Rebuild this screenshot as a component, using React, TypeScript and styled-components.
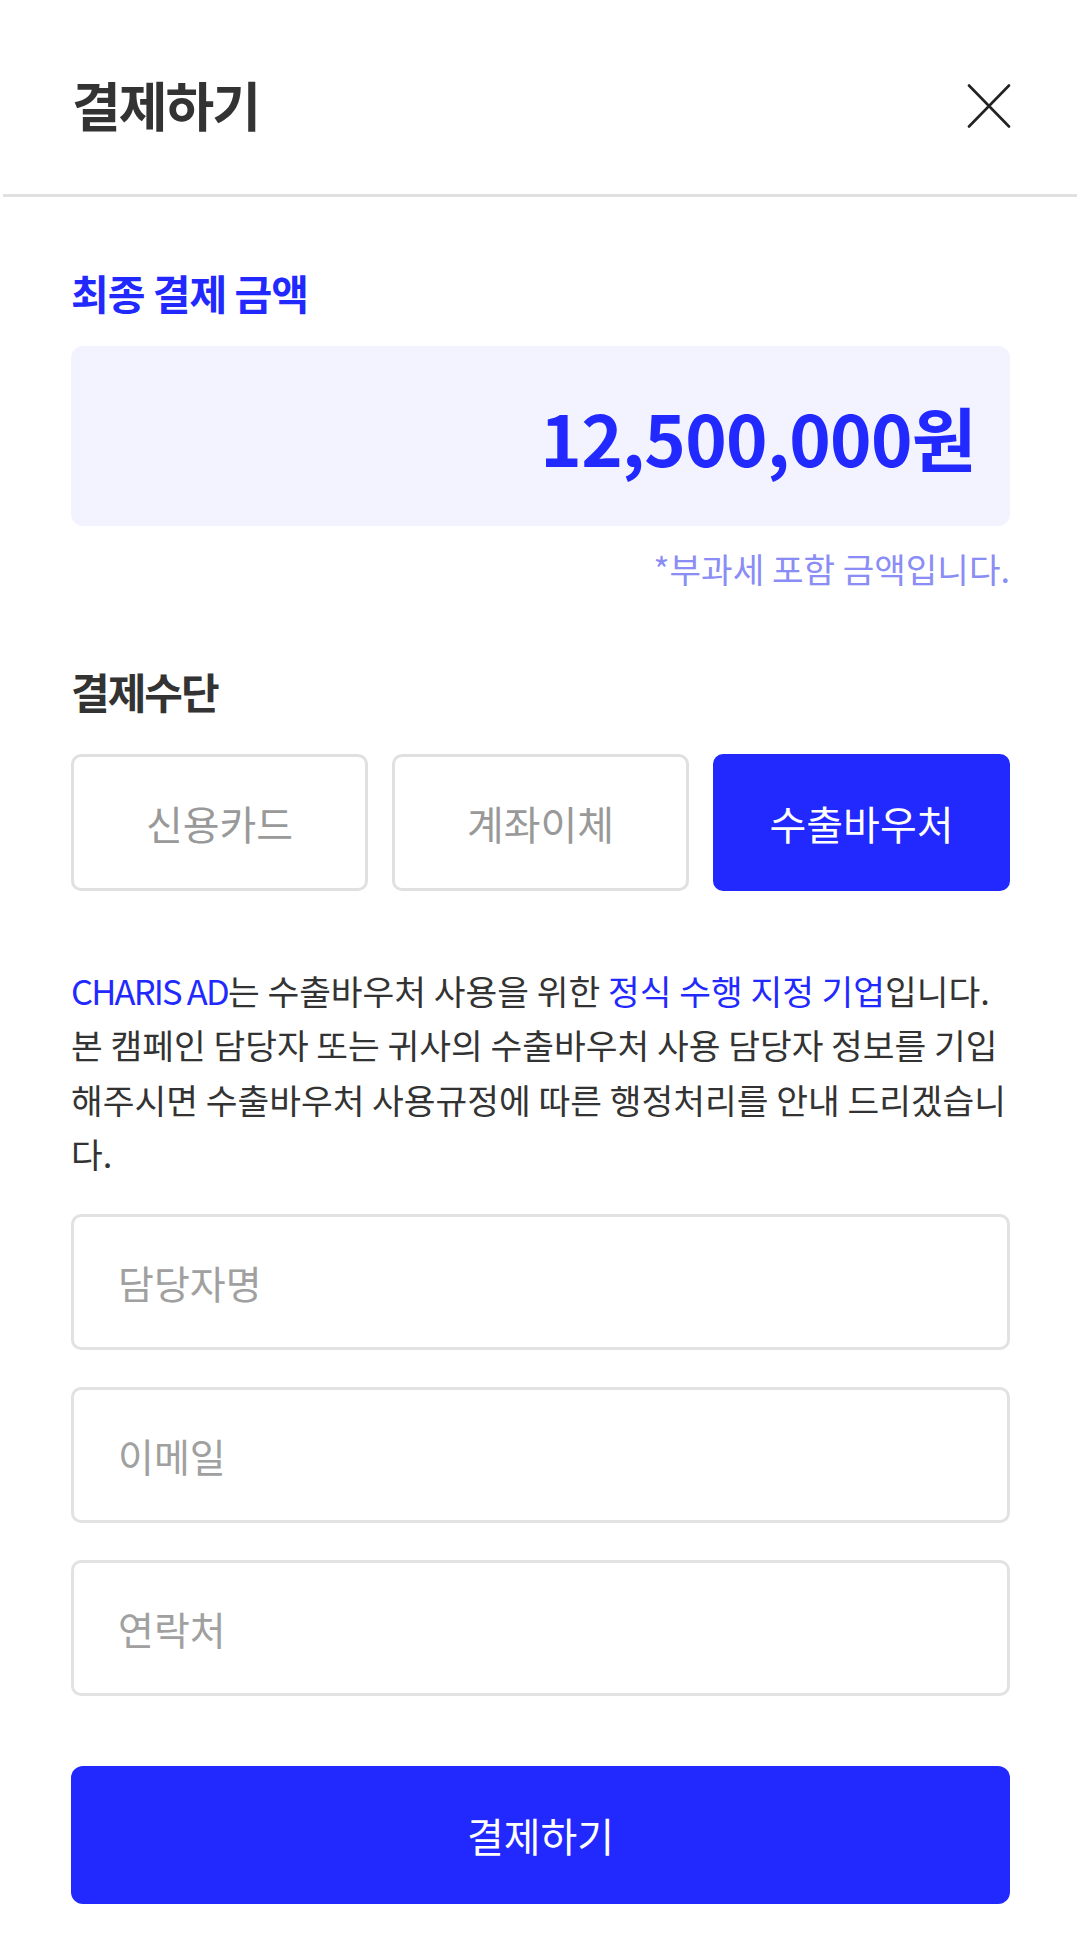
import styled, { createGlobalStyle } from "styled-components";

const GlobalStyle = createGlobalStyle`
  * {
    box-sizing: border-box;
  }
  html, body {
    margin: 0;
    padding: 0;
    background: #fff;
  }
  body {
    font-family: "Noto Sans CJK KR", "Noto Sans", sans-serif;
    color: #333;
  }
`;

const BLUE = "#2229ff";
const FONT = `"Noto Sans CJK KR", "Noto Sans", sans-serif`;

const methods = ["신용카드", "계좌이체", "수출바우처"];
const fields = ["담당자명", "이메일", "연락처"];

const App = () => {
  return (
    <>
      <GlobalStyle />
      <Wrap>
        <Header>
          <Title>결제하기</Title>
          <CloseButton aria-label="닫기">
            <svg width="44" height="44" viewBox="0 0 44 44" fill="none">
              <path
                d="M2 1.5L42 42.5M42 1.5L2 42.5"
                stroke="#222"
                strokeWidth="2.6"
                strokeLinecap="round"
              />
            </svg>
          </CloseButton>
        </Header>
        <Contents>
          <SectionLabel>최종 결제 금액</SectionLabel>
          <AmountBox>
            <Amount>12,500,000원</Amount>
          </AmountBox>
          <Note>*부과세 포함 금액입니다.</Note>

          <SubTitle>결제수단</SubTitle>
          <MethodGrid>
            {methods.map((m, i) => (
              <MethodButton key={m} $active={i === 2}>
                {m}
              </MethodButton>
            ))}
          </MethodGrid>

          <Description>
            <Brand>CHARIS AD</Brand>는 수출바우처 사용을 위한{" "}
            <Highlight>정식 수행 지정 기업</Highlight>입니다. 본 캠페인 담당자
            또는 귀사의 수출바우처 사용 담당자 정보를 기입해주시면 수출바우처
            사용규정에 따른 행정처리를 안내 드리겠습니다.
          </Description>

          <Form>
            {fields.map((f) => (
              <Input key={f} placeholder={f} />
            ))}
          </Form>

          <SubmitButton>결제하기</SubmitButton>
        </Contents>
      </Wrap>
    </>
  );
};

export default App;

const Wrap = styled.div`
  width: 1080px;
  min-height: 1937px;
  background: #fff;
`;

const Header = styled.header`
  height: 197px;
  padding: 14px 68px 0 69px;
  margin: 0 3px;
  display: flex;
  align-items: center;
  justify-content: space-between;
  border-bottom: 3px solid #e0e0e0;
`;

const Title = styled.h1`
  margin: 0;
  font-size: 53px;
  font-weight: 700;
  letter-spacing: -2px;
  color: #333;
  line-height: 1;
`;

const CloseButton = styled.button`
  width: 44px;
  height: 44px;
  padding: 0;
  margin-right: -2px;
  margin-top: 4px;
  border: none;
  background: none;
  display: flex;
  align-items: center;
  justify-content: center;
`;

const Contents = styled.div`
  padding: 0 70px 0 71px;
  display: flex;
  flex-direction: column;
`;

const SectionLabel = styled.h2`
  margin: 65px 0 0;
  font-size: 41px;
  line-height: 60px;
  font-weight: 700;
  letter-spacing: -1px;
  color: ${BLUE};
`;

const AmountBox = styled.div`
  margin-top: 24px;
  height: 180px;
  background: #f2f3fe;
  border-radius: 12px;
  display: flex;
  align-items: center;
  justify-content: flex-end;
  padding: 0 34px;
`;

const Amount = styled.strong`
  font-size: 70.5px;
  font-weight: 700;
  letter-spacing: -0.7px;
  color: ${BLUE};
`;

const Note = styled.p`
  margin: 22px 0 0;
  text-align: right;
  font-size: 34.3px;
  line-height: 40px;
  color: #8a8df5;
`;

const SubTitle = styled.h3`
  margin: 75px 0 0;
  font-size: 42px;
  line-height: 56px;
  font-weight: 700;
  letter-spacing: -2px;
  color: #333;
`;

const MethodGrid = styled.div`
  margin-top: 35px;
  display: grid;
  grid-template-columns: repeat(3, 1fr);
  gap: 24px;
`;

const MethodButton = styled.button<{ $active?: boolean }>`
  height: 137px;
  border-radius: 10px;
  border: 3px solid ${({ $active }) => ($active ? BLUE : "#e0e0e0")};
  background: ${({ $active }) => ($active ? BLUE : "#fff")};
  color: ${({ $active }) => ($active ? "#fff" : "#999")};
  font-family: ${FONT};
  font-size: 40px;
  font-weight: 400;
`;

const Description = styled.p`
  margin: 72px 0 0;
  font-size: 34.5px;
  line-height: 54.3px;
  color: #333;
  word-break: break-all;
`;

const Highlight = styled.span`
  color: ${BLUE};
`;

const Brand = styled(Highlight)`
  letter-spacing: -1.8px;
`;

const Form = styled.div`
  margin-top: 34px;
  display: flex;
  flex-direction: column;
  gap: 37px;
`;

const Input = styled.input`
  height: 136px;
  width: 100%;
  border: 3px solid #e2e2e2;
  border-radius: 10px;
  padding: 0 44px;
  font-family: ${FONT};
  font-size: 39px;
  color: #333;
  outline: none;
  &::placeholder {
    color: #a0a0a0;
  }
`;

const SubmitButton = styled.button`
  margin-top: 70px;
  height: 138px;
  border: none;
  border-radius: 12px;
  background: ${BLUE};
  color: #fff;
  font-family: ${FONT};
  font-size: 40px;
  font-weight: 400;
`;
